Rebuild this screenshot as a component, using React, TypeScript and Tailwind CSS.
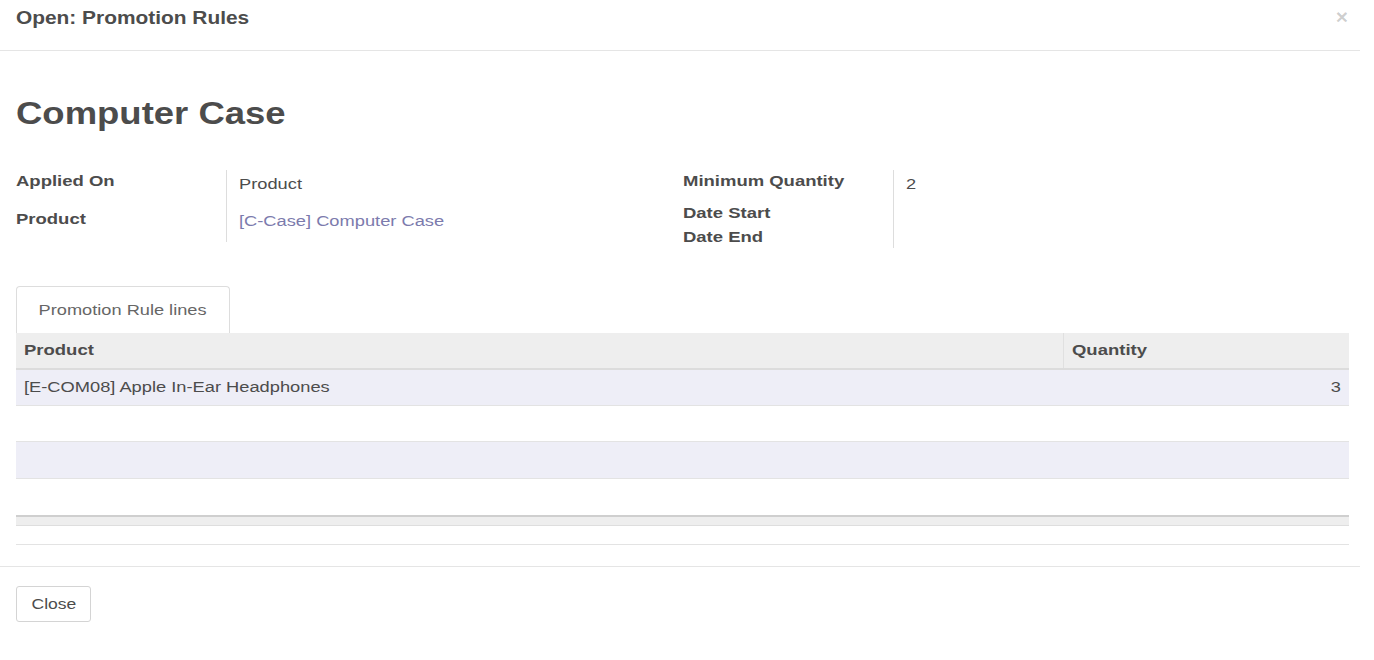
import React from "react";

function T({ children, c = "" }: { children: React.ReactNode; c?: string }) {
  return <span className={"inline-block whitespace-nowrap " + c}>{children}</span>;
}

export default function App() {
  const font = { fontFamily: '"Liberation Sans", Arial, sans-serif' };
  const label = "w-[210px] font-bold leading-[22px]";
  const sb = "origin-left scale-x-[1.32]";
  const sr = "origin-left scale-x-[1.305]";
  return (
    <div className="w-[1360px] bg-white text-[14px] text-[#4c4c4c]" style={font}>
      {/* Header */}
      <div className="h-[51px] border-b border-[#e5e5e5] flex items-start justify-between px-4">
        <div className="pt-[8px] leading-[20px] text-[18px] font-bold">
          <T c="origin-left scale-x-[1.16]">Open: Promotion Rules</T>
        </div>
        <div className="pt-[5px] -mr-[4px] text-[21px] font-bold leading-[24px] text-black/20">×</div>
      </div>

      {/* Body */}
      <div className="px-4">
        <h1 className="pt-[44px] text-[32px] font-bold leading-[36px] text-[#4c4c4c]">
          <T c="origin-left scale-x-[1.14]">Computer Case</T>
        </h1>

        <div className="mt-[39px] flex w-[1333px]">
          {/* left group */}
          <div className="w-1/2 flex flex-col">
            <div className="flex h-[32px]">
              <div className={label}><T c={sb}>Applied On</T></div>
              <div className="border-l border-[#ddd] pl-3 pt-[3px] leading-[22px] flex-1"><T c={sr}>Product</T></div>
            </div>
            <div className="flex h-[40px]">
              <div className={label + " pt-[6px]"}><T c={sb}>Product</T></div>
              <div className="border-l border-[#ddd] pl-3 pt-[8px] leading-[22px] flex-1 text-[#7c7bad]">
                <T c={sr}>[C-Case] Computer Case</T>
              </div>
            </div>
          </div>
          {/* right group */}
          <div className="w-1/2 flex flex-col">
            <div className="flex h-[32px]">
              <div className={label}><T c={sb}>Minimum Quantity</T></div>
              <div className="border-l border-[#ddd] pl-3 pt-[3px] leading-[22px] flex-1"><T c={sr}>2</T></div>
            </div>
            <div className="flex h-[24px]">
              <div className={label}><T c={sb}>Date Start</T></div>
              <div className="border-l border-[#ddd] flex-1"></div>
            </div>
            <div className="flex h-[22px]">
              <div className={label}><T c={sb}>Date End</T></div>
              <div className="border-l border-[#ddd] flex-1"></div>
            </div>
          </div>
        </div>

        {/* Tabs */}
        <div className="mt-[38px] w-[1333px]">
          <div className="flex">
            <div className="w-[214px] h-[47px] border border-b-0 border-[#ddd] rounded-t-[4px] flex items-center justify-center text-[#666]">
              <T c="origin-center scale-x-[1.3]">Promotion Rule lines</T>
            </div>
          </div>

          {/* Table */}
          <div className="flex h-[37px] bg-[#eeeeee] border-b-2 border-[#dcdcdc] font-bold">
            <div className="flex-1 px-2 flex items-center"><T c={sb}>Product</T></div>
            <div className="w-[286px] border-l border-[#e0e0e0] px-2 flex items-center"><T c={sb}>Quantity</T></div>
          </div>
          <div className="flex h-[36px] bg-[#eeeef7] border-b border-[#e3e3e3] items-center">
            <div className="flex-1 px-2"><T c={sr}>[E-COM08] Apple In-Ear Headphones</T></div>
            <div className="w-[286px] px-2 text-right"><T c="origin-right scale-x-[1.3]">3</T></div>
          </div>
          <div className="h-[36px] bg-white border-b border-[#e3e3e3]"></div>
          <div className="h-[37px] bg-[#eeeef7] border-b border-[#e3e3e3]"></div>
          <div className="h-[36px] bg-white"></div>
          <div className="h-[11px] bg-[#eeeeee] border-t-2 border-[#cfcfcf] border-b border-b-[#dedede]"></div>
          <div className="h-[19px] border-b border-[#e3e3e3]"></div>
        </div>
      </div>

      {/* Footer */}
      <div className="mt-[21px] border-t border-[#e5e5e5] px-4 pt-[19px] pb-[38px]">
        <button className="w-[75px] h-[36px] border border-[#d4d4d4] rounded-[3px] bg-white text-[14px] text-[#4c4c4c]" style={font}>
          <T c="origin-center scale-x-[1.25]">Close</T>
        </button>
      </div>
    </div>
  );
}
